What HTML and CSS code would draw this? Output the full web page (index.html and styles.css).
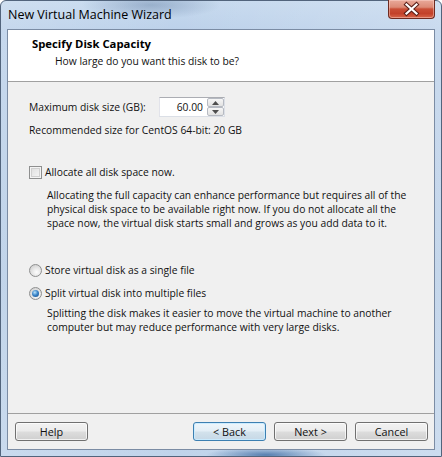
FILE: index.html
```html
<!DOCTYPE html>
<html>
<head>
<meta charset="utf-8">
<title>New Virtual Machine Wizard</title>
<link rel="stylesheet" href="styles.css">
</head>
<body>
<div class="window">
  <div class="titlebar">
    <span class="title">New Virtual Machine Wizard</span>
    <button class="close" aria-label="Close">
      <svg width="45" height="18" viewBox="0 0 45 18">
        <path d="M17.5 4.5 L27.5 13.5 M27.5 4.5 L17.5 13.5" stroke="#5a1f18" stroke-width="4.2" stroke-linecap="square" fill="none"/>
        <path d="M17.5 4.5 L27.5 13.5 M27.5 4.5 L17.5 13.5" stroke="#ffffff" stroke-width="2.2" stroke-linecap="square" fill="none"/>
      </svg>
    </button>
  </div>
  <div class="client">
    <div class="header">
      <div class="h-title">Specify Disk Capacity</div>
      <div class="h-sub">How large do you want this disk to be?</div>
    </div>
    <div class="body">
      <div class="size-row">
        <span class="size-label">Maximum disk size (GB):</span>
        <div class="spin">
          <span class="spin-val">60.00</span>
          <div class="spin-btns">
            <span class="spin-btn"><svg width="7" height="4" viewBox="0 0 7 4"><path d="M0 4 L3.5 0 L7 4 Z" fill="#4d4d4d"/></svg></span>
            <span class="spin-btn"><svg width="7" height="4" viewBox="0 0 7 4"><path d="M0 0 L3.5 4 L7 0 Z" fill="#4d4d4d"/></svg></span>
          </div>
        </div>
      </div>
      <div class="rec">Recommended size for CentOS 64-bit: 20 GB</div>
      <div class="check-row"><span class="checkbox"></span><span>Allocate all disk space now.</span></div>
      <p class="desc desc1">Allocating the full capacity can enhance performance but requires all of the<br>physical disk space to be available right now. If you do not allocate all the<br>space now, the virtual disk starts small and grows as you add data to it.</p>
      <div class="radio-row r1"><span class="radio"></span><span>Store virtual disk as a single file</span></div>
      <div class="radio-row r2"><span class="radio on"></span><span>Split virtual disk into multiple files</span></div>
      <p class="desc desc2">Splitting the disk makes it easier to move the virtual machine to another<br>computer but may reduce performance with very large disks.</p>
    </div>
    <div class="footer">
      <button class="btn">Help</button>
      <div class="spacer"></div>
      <button class="btn focus">&lt; Back</button>
      <button class="btn">Next &gt;</button>
      <button class="btn">Cancel</button>
    </div>
  </div>
</div>
</body>
</html>
```

FILE: styles.css
```css
* { box-sizing: border-box; }
html, body { margin: 0; padding: 0; }
body {
  width: 442px;
  height: 457px;
  overflow: hidden;
  font-family: "Open Sans", "Noto Sans", sans-serif;
  font-size: 10.3px;
  color: #111;
  background: #fff;
}
.window {
  width: 442px;
  height: 457px;
  display: flex;
  flex-direction: column;
  border: 1px solid #52647c;
  border-radius: 6px 6px 0 0;
  padding: 0 6px 6px;
  background:
    radial-gradient(ellipse 70px 14px at 150px 4px, rgba(70,100,140,0.35), rgba(70,100,140,0) 100%),
    radial-gradient(ellipse 60px 8px at 265px 454px, rgba(40,90,150,0.7), rgba(40,90,150,0) 100%),
    linear-gradient(90deg, rgba(255,255,255,0.15), rgba(255,255,255,0) 40%, rgba(255,255,255,0.2) 100%),
    linear-gradient(180deg, #c6d9ee 0%, #bcd1ea 30px, #b7cde6 60%, #c0d4eb 100%);
}
.titlebar {
  height: 28px;
  display: flex;
  align-items: flex-start;
}
.title {
  flex: 1;
  font-size: 12.5px;
  line-height: 14px;
  margin-top: 7px;
  padding-left: 1px;
  color: #000;
}
.close {
  width: 47px;
  height: 19px;
  padding: 0;
  margin: -1px 0 0 0;
  border: 1px solid #6e2a20;
  border-top: none;
  border-radius: 0 0 4px 4px;
  background: linear-gradient(180deg, #e9a99a 0%, #dc8a76 40%, #c94e36 50%, #c3412a 75%, #d8664a 100%);
  box-shadow: inset 0 0 0 1px rgba(255,220,210,0.45);
  display: flex;
  align-items: center;
  justify-content: center;
}
.close svg { display: block; }
.client {
  flex: 1;
  display: flex;
  flex-direction: column;
  border: 1px solid #7b8ca4;
  background: #f0f0f0;
}
.header {
  height: 52px;
  background: #fff;
  border-bottom: 1px solid #a0a0a0;
  padding: 7px 0 0 24px;
  line-height: 14px;
}
.h-title {
  font-weight: bold;
  font-size: 11.3px;
  color: #000;
}
.h-sub {
  margin-top: 3px;
  padding-left: 23px;
}
.body {
  flex: 1;
  padding: 15px 0 0 21px;
  line-height: 14px;
}
.size-row {
  display: flex;
  align-items: center;
  height: 20px;
}
.size-label { width: 130px; }
.spin {
  width: 66px;
  height: 20px;
  display: flex;
  background: #fff;
  border: 1px solid #dbdfe6;
  border-top-color: #abadb3;
  border-left-color: #e2e3ea;
}
.spin-val {
  flex: 1;
  text-align: right;
  line-height: 18px;
  padding-right: 4px;
}
.spin-btns {
  width: 17px;
  display: flex;
  flex-direction: column;
}
.spin-btn {
  flex: 1;
  display: flex;
  align-items: center;
  justify-content: center;
  border: 1px solid #b6bac2;
  border-radius: 2px;
  background: linear-gradient(180deg, #f6f6f6, #e2e2e2);
}
.spin-btn svg { display: block; }
.rec { margin-top: 6px; }
.check-row, .radio-row {
  display: flex;
  align-items: center;
  gap: 3px;
  height: 14px;
}
.check-row { margin-top: 28px; }
.checkbox {
  width: 13px;
  height: 13px;
  border: 1px solid #8e8f8f;
  background: linear-gradient(135deg, #dcdcdc, #f8f8f8);
  box-shadow: inset 0 0 0 1px #f4f4f4, inset 0 0 0 2px #d0d0d0;
}
.desc { margin: 9px 0 0 18px; }
.desc2 { margin-top: 6px; }
.r1 { margin-top: 33px; }
.r2 { margin-top: 9px; }
.radio {
  width: 13px;
  height: 13px;
  border-radius: 50%;
  border: 1px solid #8e8f8f;
  background: radial-gradient(circle at 60% 65%, #fdfdfd 0%, #e6e6e6 45%, #c4c4c4 100%);
  display: flex;
  align-items: center;
  justify-content: center;
}
.radio.on::after {
  content: "";
  width: 7px;
  height: 7px;
  border-radius: 50%;
  background: radial-gradient(circle at 40% 35%, #b9e3fb 0%, #3c86c9 45%, #0e4482 100%);
}
.footer {
  border-top: 1px solid #a0a0a0;
  display: flex;
  gap: 8px;
  padding: 8px 6px 8px 7px;
}
.spacer { flex: 1; }
.btn {
  width: 73px;
  height: 19px;
  padding: 0;
  font-family: inherit;
  font-size: 10.8px;
  line-height: 17px;
  color: #111;
  border: 1px solid #707070;
  border-radius: 3px;
  background: linear-gradient(180deg, #f2f2f2 0%, #ebebeb 48%, #dddddd 52%, #cfcfcf 100%);
  box-shadow: inset 0 0 0 1px rgba(255,255,255,0.7);
}
.btn.focus {
  border-color: #3c7fb1;
  background: linear-gradient(180deg, #eef6fb 0%, #e3eef6 48%, #d3e2ec 52%, #c6d8e6 100%);
  box-shadow: inset 0 0 0 1px rgba(200,235,255,0.9);
}
```
